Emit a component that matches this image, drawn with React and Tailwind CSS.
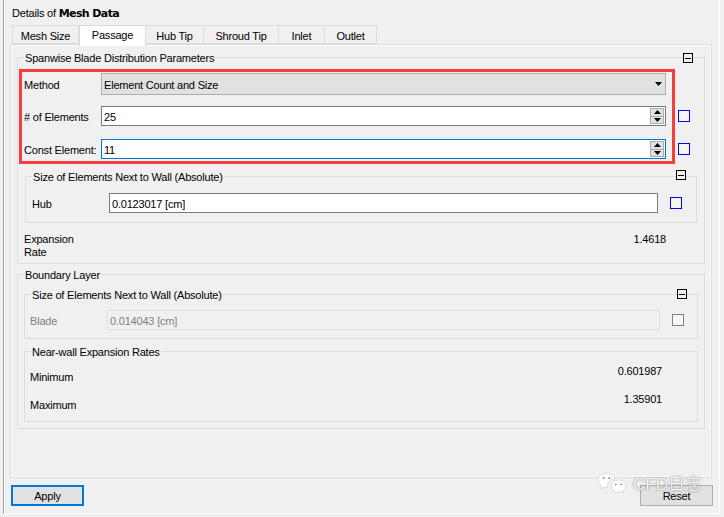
const font = "font-['Liberation_Sans','Noto_Sans_CJK_SC',sans-serif]";

const Collapse = ({ pos }) => (
  <span className={`absolute ${pos} flex h-[10px] w-[10px] items-center justify-center border border-black bg-[#f0f0f0]`}>
    <span className="h-px w-[6px] bg-black" />
  </span>
);

const Group = ({ title, className, children }) => (
  <div className={`relative border border-[#dcdcdc] ${className}`}>
    <span className="absolute left-[6px] top-[-7px] bg-[#f0f0f0] px-px leading-[15px] whitespace-nowrap">{title}</span>
    {children}
  </div>
);

const Check = ({ color = "border-[#0000ff]" }) => (
  <span className={`ml-3 h-[12px] w-[12px] border ${color} bg-[#f6f6f6]`} />
);

const Arrow = ({ up }) => (
  <svg width="7" height="4" viewBox="0 0 7 4" className="block">
    <path d={up ? "M3.5 0L7 4H0Z" : "M0 0H7L3.5 4Z"} fill="#000" />
  </svg>
);

const Spin = () => (
  <div className="mr-px flex h-[16px] w-[14px] flex-col border border-[#adadad] bg-[#e1e1e1]">
    <div className="flex flex-1 items-center justify-center border-b border-[#adadad]"><Arrow up /></div>
    <div className="flex flex-1 items-center justify-center"><Arrow /></div>
  </div>
);

const SpinRow = ({ label, value, border, className }) => (
  <div className={`flex items-center ${className}`}>
    <span className="mr-[5px] w-[72px] overflow-hidden whitespace-nowrap pt-[2px]">{label}</span>
    <div className={`flex h-[20px] w-[565px] items-center justify-between border ${border} bg-white pl-[2px]`}>
      <span className="pt-[2px]">{value}</span>
      <Spin />
    </div>
    <Check />
  </div>
);

const tabs = [
  { name: "Mesh Size", width: "w-[67px]" },
  { name: "Passage", width: "w-[67px]", active: true },
  { name: "Hub Tip", width: "w-[58px]" },
  { name: "Shroud Tip", width: "w-[75px]" },
  { name: "Inlet", width: "w-[46px]" },
  { name: "Outlet", width: "w-[52px]" },
];

export default function App() {
  return (
    <div className={`relative h-[517px] w-[724px] overflow-hidden bg-[#f0f0f0] pb-[3px] pl-[3px] pr-[4px] text-[11px] leading-[13px] tracking-[-0.2px] text-black ${font}`}>
      <div className="h-full border-b border-l border-r border-b-white border-l-[#a0a0a0] border-r-white pl-[6px] shadow-[inset_1px_0_0_#fff]">
        <div className="flex h-[25px] items-center pl-[2px] pt-px">
          Details of&nbsp;<b className="font-['DejaVu_Sans'] text-[11px] tracking-[-0.6px]">Mesh Data</b>
        </div>
        <div className="ml-[2px] flex h-[19px] items-end">
          {tabs.map((t) => (
            <div
              key={t.name}
              className={
                t.active
                  ? `relative z-10 -mb-[2px] flex h-[21px] ${t.width} items-center justify-center border border-b-0 border-[#dcdcdc] bg-white pb-px`
                  : `flex h-[19px] ${t.width} items-center justify-center border border-l-0 border-[#dcdcdc] pt-[3px] first:border-l`
              }
            >
              {t.name}
            </div>
          ))}
        </div>
        <div className="h-[434px] w-[702px] border border-[#dcdcdc] pl-[6px] pt-[12px] shadow-[inset_0_0_0_1px_#fff]">
          <Group title="Spanwise Blade Distribution Parameters" className="h-[207px] w-[688px]">
            <Collapse pos="right-[11px] top-[-5px]" />
            <div className="pl-[6px] pt-[15px]">
              <div className="flex items-center">
                <span className="w-[77px] pt-[2px]">Method</span>
                <div className="flex h-[22px] w-[565px] items-center justify-between border border-[#adadad] bg-[#e1e1e1] pl-[2px] pr-[3px]">
                  <span className="pt-[2px]">Element Count and Size</span>
                  <Arrow />
                </div>
              </div>
              <SpinRow className="mt-[11px]" label="# of Elements" value="25" border="border-[#7a7a7a]" />
              <SpinRow className="mt-[13px]" label="Const Element:" value="11" border="border-[#0078d7]" />
            </div>
            <div className="absolute left-px top-[11px] h-[95px] w-[656px] border-[3px] border-[#f63c3c]" />
            <Group title="Size of Elements Next to Wall (Absolute)" className="ml-[7px] mt-[17px] h-[47px] w-[672px]">
              <Collapse pos="right-[10px] top-[-7px]" />
              <div className="flex items-center pl-[6px] pt-[16px]">
                <span className="w-[77px] pt-[2px]">Hub</span>
                <div className="flex h-[20px] w-[549px] items-center border border-[#7a7a7a] bg-white pl-[2px]">
                  <span className="pt-[2px]">0.0123017 [cm]</span>
                </div>
                <Check />
              </div>
            </Group>
            <div className="flex w-[648px] items-start justify-between pl-[6px] pt-[10px]">
              <span>Expansion<br />Rate</span>
              <span>1.4618</span>
            </div>
          </Group>
          <Group title="Boundary Layer" className="mt-[10px] h-[155px] w-[688px]">
            <Group title="Size of Elements Next to Wall (Absolute)" className="ml-[6px] mt-[19px] h-[45px] w-[674px]">
              <Collapse pos="right-[10px] top-[-6px]" />
              <div className="flex items-center pl-[5px] pt-[15px] text-[#808080]">
                <span className="w-[77px] pt-[2px]">Blade</span>
                <div className="flex h-[20px] w-[553px] items-center border border-[#dcdcdc] pl-[2px] shadow-[inset_0_0_0_1px_#f5f5f5]">
                  <span className="pt-[2px]">0.014043 [cm]</span>
                </div>
                <Check color="border-[#808080]" />
              </div>
            </Group>
            <Group title="Near-wall Expansion Rates" className="ml-[6px] mt-[12px] h-[71px] w-[674px]">
              <div className="flex w-[637px] flex-col gap-[13px] pl-[5px] pt-[18px]">
                <div className="flex h-[15px] items-center justify-between">
                  <span>Minimum</span>
                  <span className="pb-[12px]">0.601987</span>
                </div>
                <div className="flex h-[15px] items-center justify-between">
                  <span>Maximum</span>
                  <span className="pb-[12px]">1.35901</span>
                </div>
              </div>
            </Group>
          </Group>
        </div>
        <div className="ml-px mt-[7px] flex w-[702px] justify-between">
          <div className="flex h-[21px] w-[73px] items-center justify-center border-2 border-[#0078d7] bg-[#e1e1e1] pt-[2px]">Apply</div>
          <div className="flex h-[21px] w-[73px] items-center justify-center border border-[#adadad] bg-[#e1e1e1] pt-[2px]">Reset</div>
        </div>
      </div>
      {/* watermark */}
      <div className="absolute left-[597px] top-[472px] flex items-center">
        <svg width="30" height="25" viewBox="0 0 30 25">
          <path d="M9.5 1.5C4.8 1.5 1.2 4.6 1.2 8.4c0 2.3 1.3 4.2 3.4 5.5L3.6 17l3.6-1.9c.9.2 1.6.4 2.6.4h1c-.2-.6-.3-1.3-.3-2 0-3.8 3.4-6.6 7.4-6.6h.6C17.100 3.900 13.500 1.500 9.500 1.500Z" fill="#fff" stroke="#c8c8c8" strokeWidth=".6" />
          <path d="M28.800 14.100c0-3.300-3.300-6-7.300-6s-7.300 2.700-7.300 6 3.300 6 7.300 6c.8 0 1.700-.1 2.500-.4l2.800 1.500-.8-2.500c2-1.200 2.800-2.800 2.800-4.600Z" fill="#fff" stroke="#c8c8c8" strokeWidth=".6" />
          <circle cx="6.600" cy="6" r="1" fill="#8a8a8a" />
          <circle cx="12.400" cy="6" r="1" fill="#8a8a8a" />
          <circle cx="18.800" cy="12.400" r=".9" fill="#8a8a8a" />
          <circle cx="24.200" cy="12.400" r=".9" fill="#8a8a8a" />
        </svg>
        <span className="ml-[6px] text-[17px] leading-[20px] tracking-normal text-[#f4f4f4] [text-shadow:0_0_2px_#6e6e6e]">CFD日志</span>
      </div>
    </div>
  );
}
